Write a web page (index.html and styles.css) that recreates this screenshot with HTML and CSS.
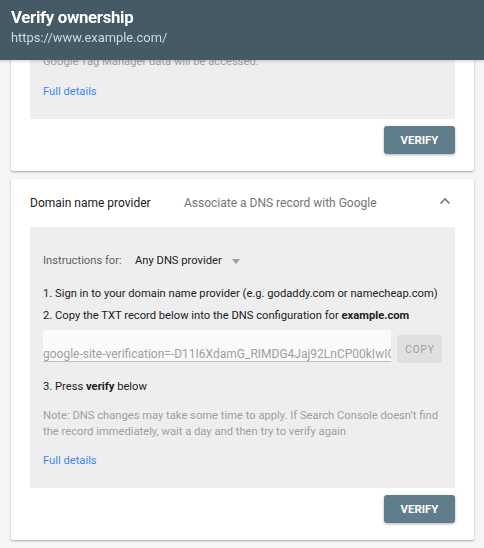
FILE: index.html
```html
<!DOCTYPE html>
<html>
<head>
<meta charset="utf-8">
<link rel="stylesheet" href="styles.css">
</head>
<body>
<header class="topbar">
  <div class="title">Verify ownership</div>
  <div class="url">https://www.example.com/</div>
</header>
<main class="page">
  <section class="card">
    <div class="panel panel-first">
      <p class="muted">Google Tag Manager data will be accessed.</p>
      <a class="link">Full details</a>
    </div>
    <div class="actions"><button class="verify">VERIFY</button></div>
  </section>
  <section class="card">
    <div class="card-head">
      <span class="head-title">Domain name provider</span>
      <span class="head-sub">Associate a DNS record with Google</span>
      <svg class="chev" width="12" height="8" viewBox="0 0 12 8"><polyline points="1.5,6.5 6,2 10.5,6.5" fill="none" stroke="#757575" stroke-width="1.6"/></svg>
    </div>
    <div class="panel">
      <div class="instr">
        <span class="instr-label">Instructions for:</span>
        <span class="instr-value">Any DNS provider</span>
        <span class="tri"></span>
      </div>
      <p class="step step-first">1. Sign in to your domain name provider (e.g. godaddy.com or namecheap.com)</p>
      <p class="step">2. Copy the TXT record below into the DNS configuration for <b>example.com</b></p>
      <div class="record">
        <input class="record-field" type="text" readonly value="google-site-verification=-D11I6XdamG_RIMDG4Jaj92LnCP00kIwIOxHmVfSgqrU">
        <button class="copy">COPY</button>
      </div>
      <p class="step step-three">3. Press <b>verify</b> below</p>
      <p class="note">Note: DNS changes may take some time to apply. If Search Console doesn’t find the record immediately, wait a day and then try to verify again</p>
      <a class="link link-last">Full details</a>
    </div>
    <div class="actions"><button class="verify">VERIFY</button></div>
  </section>
</main>
</body>
</html>
```
FILE: styles.css
```css
* { box-sizing: border-box; }
html, body { margin: 0; padding: 0; }
body {
  background: #f5f5f5;
  font-family: Roboto, "Liberation Sans", Arial, sans-serif;
  color: #212121;
  width: 484px;
  height: 548px;
  overflow: hidden;
}
.topbar {
  position: fixed;
  top: 0; left: 0; right: 0;
  height: 60px;
  background: #455a64;
  padding: 6px 11px 0;
  z-index: 5;
  box-shadow: 0 1px 3px rgba(0,0,0,.2);
}
.title {
  color: #fff;
  font-size: 16.8px;
  font-weight: 700;
  letter-spacing: -0.3px;
  line-height: 22px;
}
.url {
  color: #cfd8dc;
  font-size: 12.9px;
  line-height: 18px;
  margin-top: 1px;
}
.page {
  padding: 0 10px 0 11px;
  display: flex;
  flex-direction: column;
  gap: 8px;
}
.card {
  background: #fff;
  padding: 0 19px 17px;
  box-shadow: 0 1px 2px rgba(0,0,0,.25), 0 1px 3px rgba(0,0,0,.08);
  border-radius: 2px;
}
.panel {
  background: #eeeeee;
  padding: 24px 13px 17px;
  font-size: 11.2px;
}
.panel-first { padding-top: 54px; }
p { margin: 0; }
.muted {
  color: #9e9e9e;
  line-height: 16px;
}
.link {
  display: block;
  color: #4285f4;
  font-size: 11.2px;
  line-height: 20px;
  margin-top: 12px;
  cursor: pointer;
}
.link-last { margin-top: 11px; }
.actions {
  display: flex;
  justify-content: flex-end;
  margin-top: 7px;
}
.verify {
  width: 71px;
  height: 28px;
  border: 0;
  border-radius: 3px;
  background: #607d8b;
  color: #fff;
  font-family: inherit;
  font-size: 11.4px;
  font-weight: 700;
  box-shadow: 0 1px 3px rgba(0,0,0,.3);
  padding: 0;
}
.card-head {
  height: 48px;
  display: flex;
  align-items: center;
  font-size: 12px;
}
.head-title { width: 154px; color: #212121; }
.head-sub { flex: 1; color: #757575; }
.chev { margin-right: 4px; margin-top: -4px; }
.instr {
  display: flex;
  align-items: center;
  line-height: 20px;
}
.instr-label { color: #616161; width: 92px; }
.instr-value { color: #212121; font-weight: 400; }
.tri {
  width: 0; height: 0;
  border-left: 4px solid transparent;
  border-right: 4px solid transparent;
  border-top: 5px solid #9e9e9e;
  margin-left: 10px;
}
.step {
  line-height: 22px;
  color: #212121;
}
.step b { font-weight: 700; }
.step-first { margin-top: 12px; }
.record {
  display: flex;
  margin-top: 3px;
  align-items: flex-start;
}
.record-field {
  width: 348px;
  height: 32px;
  margin: 0;
  background: #fafafa;
  border: 0;
  border-bottom: 1px solid #bdbdbd;
  border-radius: 0;
  outline: none;
  color: #9e9e9e;
  font-family: inherit;
  font-size: 12px;
  padding: 16px 0 0 0;
}
.copy {
  margin-left: 6px;
  margin-top: 5px;
  width: 45px;
  height: 28px;
  border: 0;
  border-radius: 2px;
  background: #e0e0e0;
  color: #9e9e9e;
  font-family: inherit;
  font-size: 10px;
  letter-spacing: 0.9px;
  padding: 0 0 0 1px;
}
.step-three { margin-top: 13px; }
.note {
  margin-top: 10px;
  color: #9e9e9e;
  line-height: 16px;
}
```
